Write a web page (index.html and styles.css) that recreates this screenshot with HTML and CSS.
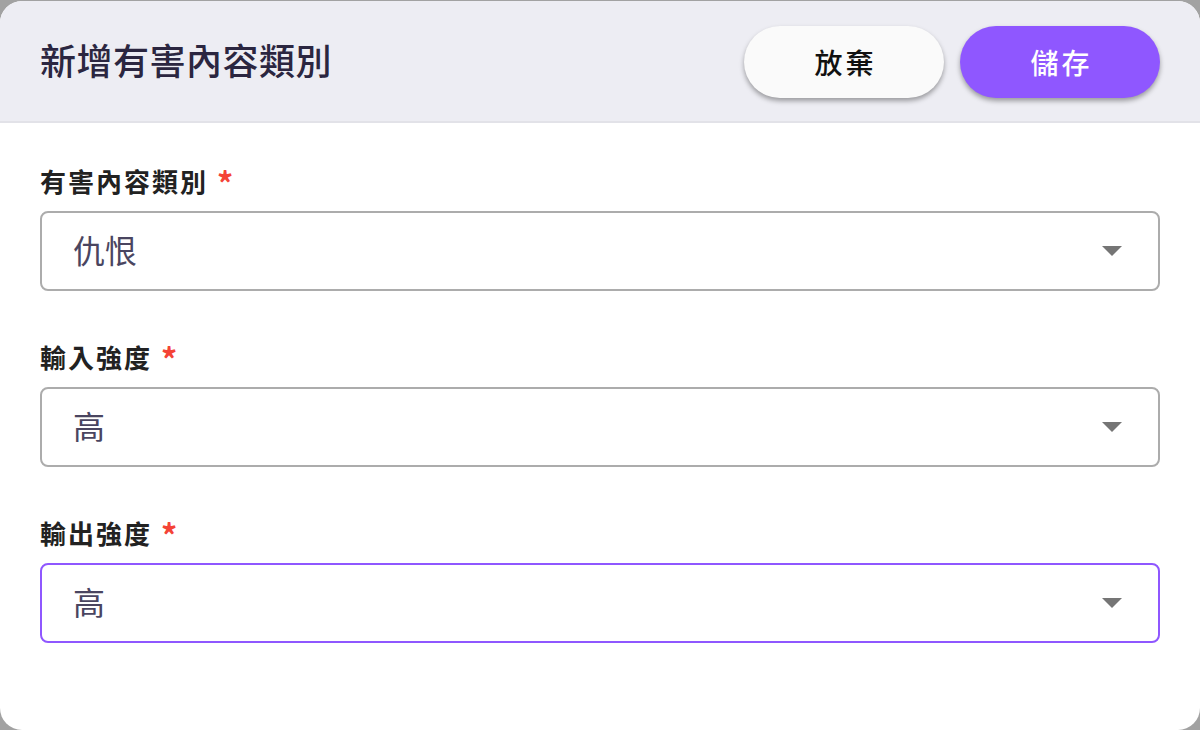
FILE: index.html
```html
<!DOCTYPE html>
<html lang="zh-Hant">
<head>
<meta charset="utf-8">
<link rel="stylesheet" href="styles.css">
</head>
<body>
<div class="dialog">
  <header class="header">
    <h1 class="title">新增有害內容類別</h1>
    <div class="actions">
      <button class="btn btn-cancel">放棄</button>
      <button class="btn btn-save">儲存</button>
    </div>
  </header>
  <main class="body">
    <div class="field">
      <label class="label">有害內容類別<span class="req">*</span></label>
      <div class="select"><span class="value">仇恨</span><span class="arrow"></span></div>
    </div>
    <div class="field">
      <label class="label">輸入強度<span class="req">*</span></label>
      <div class="select"><span class="value">高</span><span class="arrow"></span></div>
    </div>
    <div class="field">
      <label class="label">輸出強度<span class="req">*</span></label>
      <div class="select focused"><span class="value">高</span><span class="arrow"></span></div>
    </div>
  </main>
</div>
</body>
</html>
```
FILE: styles.css
```css
html, body {
  margin: 0;
  padding: 0;
  height: 100%;
  overflow: hidden;
}
body {
  background: #a2a2a2;
  font-family: "Noto Sans CJK TC", "Noto Sans", sans-serif;
  padding-top: 1px;
  box-sizing: border-box;
}
.dialog {
  width: 1200px;
  height: 729px;
  background: #ffffff;
  border-radius: 22px;
  overflow: hidden;
  display: flex;
  flex-direction: column;
}
.header {
  height: 120px;
  background: #ededf3;
  border-bottom: 2px solid #e2e2e8;
  display: flex;
  align-items: center;
  justify-content: space-between;
  padding: 0 40px;
  flex-shrink: 0;
}
.title {
  margin: 0;
  font-size: 36px;
  font-weight: 500;
  color: #2b2640;
  line-height: 1;
  margin-top: -4px;
  letter-spacing: 0.5px;
}
.actions {
  display: flex;
  gap: 16px;
  margin-top: 1px;
}
.btn {
  width: 200px;
  height: 72px;
  border: none;
  border-radius: 36px;
  font-family: "Noto Sans CJK TC", "Noto Sans", sans-serif;
  font-size: 28px;
  font-weight: 500;
  letter-spacing: 3px;
  padding: 0 0 0 3px;
  box-shadow: 0 3px 5px rgba(0, 0, 0, 0.35);
}
.btn-cancel {
  background: #fafafa;
  color: #111111;
}
.btn-save {
  background: #8f57ff;
  color: #ffffff;
}
.body {
  padding: 42px 40px 0;
  display: flex;
  flex-direction: column;
  gap: 50px;
}
.field {
  display: flex;
  flex-direction: column;
  gap: 14px;
}
.label {
  display: block;
  height: 32px;
  font-size: 26px;
  font-weight: 700;
  color: #222222;
  line-height: 32px;
  letter-spacing: 2px;
  white-space: nowrap;
}
.req {
  color: #f44336;
  margin-left: 9px;
  font-size: 32px;
  line-height: 0;
  vertical-align: -4px;
}
.select {
  height: 80px;
  box-sizing: border-box;
  border: 2px solid #acacac;
  border-radius: 8px;
  display: flex;
  align-items: center;
  justify-content: space-between;
  padding: 0 36px 0 31px;
}
.select.focused {
  border-color: #8f57ff;
}
.value {
  font-size: 32px;
  color: #4a4560;
  line-height: 1;
  margin-top: -5px;
}
.arrow {
  width: 0;
  height: 0;
  border-left: 10px solid transparent;
  border-right: 10px solid transparent;
  border-top: 10px solid #757575;
}
```
